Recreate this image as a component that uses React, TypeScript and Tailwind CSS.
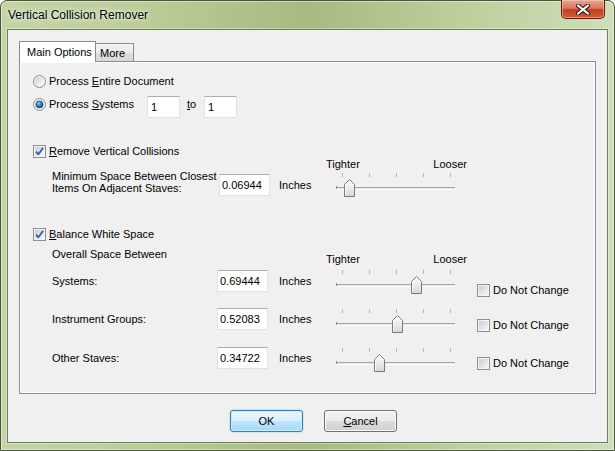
import React from "react";

function Radio({ checked }: { checked?: boolean }) {
  return (
    <svg width="13" height="13" viewBox="0 0 13 13" className="shrink-0">
      <defs>
        <linearGradient id={checked ? "rg1" : "rg0"} x1="0" y1="0" x2="1" y2="1">
          <stop offset="0" stopColor="#d0d0d0" />
          <stop offset="1" stopColor="#ffffff" />
        </linearGradient>
        <radialGradient id="rdot" cx="0.4" cy="0.35" r="0.7">
          <stop offset="0" stopColor="#8fd3ff" />
          <stop offset="0.45" stopColor="#2d87c9" />
          <stop offset="1" stopColor="#12396b" />
        </radialGradient>
      </defs>
      <circle cx="6.5" cy="6.5" r="6" fill="#f4f4f4" stroke="#8a8a8a" strokeWidth="1" />
      <circle cx="6.5" cy="6.5" r="4.5" fill={`url(#${checked ? "rg1" : "rg0"})`} />
      {checked && <circle cx="6.5" cy="6.5" r="3.6" fill="url(#rdot)" stroke="#1a3c63" strokeWidth="0.6" />}
    </svg>
  );
}

function Check({ checked }: { checked?: boolean }) {
  return (
    <svg width="13" height="13" viewBox="0 0 13 13" className="shrink-0">
      <defs>
        <linearGradient id="cbg" x1="0" y1="0" x2="1" y2="1">
          <stop offset="0" stopColor="#c9cdd2" />
          <stop offset="1" stopColor="#f7f7f7" />
        </linearGradient>
      </defs>
      <rect x="0.5" y="0.5" width="12" height="12" fill="#f4f4f4" stroke="#8e8f8f" />
      <rect x="2" y="2" width="9" height="9" fill="url(#cbg)" />
      {checked && (
        <path d="M3 6.6 L5.4 9.3 L10.2 2.8" fill="none" stroke="#3f5fa6" strokeWidth="1.9" strokeLinejoin="round" />
      )}
    </svg>
  );
}

function TextBox({ value, w, pl }: { value: string; w: string; pl: string }) {
  return (
    <div
      className={`${w} h-[22px] shrink-0 bg-white border border-[#dfe2e7] border-t-[#abadb3] ${pl} pt-[3px] leading-[14px]`}
    >
      {value}
    </div>
  );
}

function Slider({ thumb }: { thumb: number }) {
  const ticks = [6, 33, 60, 87, 114];
  return (
    <div className="relative w-[119px] h-[26px] shrink-0">
      {ticks.map((t) => (
        <div key={t} className="absolute top-0 w-px h-[4px] bg-[#b8b8b8]" style={{ left: t }} />
      ))}
      <div className="absolute left-0 right-0 top-[14px] h-[3px] border-t border-t-[#a7a7a7] bg-[#e4e4e4] border-b border-b-white" />
      <div className="absolute left-0 top-[13px] w-px h-[3px] bg-[#8a8a8a]" />
      <svg className="absolute top-[6px]" style={{ left: thumb }} width="11" height="18" viewBox="0 0 11 18">
        <defs>
          <linearGradient id="thg" x1="0" y1="0" x2="0" y2="1">
            <stop offset="0" stopColor="#fbfbfb" />
            <stop offset="0.5" stopColor="#ececec" />
            <stop offset="1" stopColor="#d6d6d6" />
          </linearGradient>
        </defs>
        <path d="M0.5 17.5 V5.5 L5.5 0.5 L10.5 5.5 V17.5 Z" fill="url(#thg)" stroke="#7a7a7a" strokeLinejoin="round" />
        <path d="M1.5 16.5 V6 L5.5 2 L9.5 6" fill="none" stroke="#ffffff" strokeWidth="0.8" />
      </svg>
    </div>
  );
}

function DNC({ mt }: { mt: string }) {
  return (
    <div className={`${mt} ml-[22px] flex h-[13px] items-center gap-[3px]`}>
      <Check />
      <span className="leading-[13px]">Do Not Change</span>
    </div>
  );
}

function SpaceRow({
  label,
  value,
  thumb,
  mt,
  sliderMt,
  dncMt,
}: {
  label: string;
  value: string;
  thumb: number;
  mt: string;
  sliderMt: string;
  dncMt: string;
}) {
  return (
    <div className={`${mt} flex h-[22px] items-start`}>
      <div className="ml-[19px] w-[165px] h-[22px] flex items-center">{label}</div>
      <TextBox value={value} w="w-[51px]" pl="pl-[2px]" />
      <div className="ml-[11px] w-[47px] h-[22px] flex items-center">Inches</div>
      <div className={`ml-[10px] ${sliderMt}`}>
        <Slider thumb={thumb} />
      </div>
      <DNC mt={dncMt} />
    </div>
  );
}

export default function App() {
  return (
    <div className="w-[615px] h-[451px] font-['Liberation_Sans',Arial,sans-serif] text-[11px] text-black">
      <div className="w-full h-full flex flex-col rounded-t-[7px] border border-[#4a5638] bg-[linear-gradient(90deg,#c3d4a5_0%,#b9cc97_25%,#a6ba82_50%,#bccf9c_75%,#d0ddba_100%)] shadow-[inset_0_0_0_1px_rgba(255,255,255,0.45)]">
        {/* title bar */}
        <div className="h-[28px] flex items-start justify-between shrink-0">
          <div className="pl-[7px] pt-[6px] text-[12px] leading-[16px] text-black [text-shadow:0_0_8px_rgba(255,255,255,0.95),0_0_3px_rgba(255,255,255,0.9)]">
            Vertical Collision Remover
          </div>
          <div className="mt-[-1px] mr-[9px] w-[44px] h-[19px] rounded-b-[5px] border border-[#5b1e12] border-t-0 bg-[linear-gradient(180deg,#e8a796_0%,#d9765f_45%,#c2401f_55%,#d25a39_100%)] shadow-[inset_0_0_0_1px_rgba(255,210,190,0.5)] flex items-center justify-center">
            <svg width="14" height="11" viewBox="0 0 14 11">
              <path d="M2 1.5 L12 9.5 M12 1.5 L2 9.5" stroke="#3a1a14" strokeWidth="4.2" strokeLinecap="round" />
              <path d="M2 1.5 L12 9.5 M12 1.5 L2 9.5" stroke="#ffffff" strokeWidth="2.2" strokeLinecap="round" />
            </svg>
          </div>
        </div>
        {/* client area */}
        <div className="flex-1 mx-[6px] mb-[7px] border border-[#6e7d57] bg-[#f0f0f0] flex flex-col pt-[11px] px-[11px] pb-[10px] shadow-[0_0_0_1px_rgba(255,255,255,0.35)]">
          {/* tabs */}
          <div className="flex h-[20px] items-start shrink-0">
            <div className="relative z-10 w-[77px] h-[21px] bg-white border border-[#898c95] border-b-0 pl-[7px] pt-[3px] leading-[14px]">
              Main Options
            </div>
            <div className="mt-[2px] w-[38px] h-[18px] border border-l-0 border-[#898c95] border-b-0 bg-[linear-gradient(180deg,#f3f3f3_0%,#ebebeb_50%,#dddddd_51%,#d9d9d9_100%)] pl-[4px] pt-[2px] leading-[14px]">
              More
            </div>
          </div>
          {/* panel */}
          <div className="flex-1 border border-[#898c95] bg-[#f0f0f0] shadow-[inset_1px_1px_0_#ffffff,inset_-1px_-1px_0_#ffffff] flex flex-col pl-[13px]">
            <div className="mt-[11px] flex h-[16px] items-center gap-[3px]">
              <Radio />
              <span>
                Process <u className="underline-offset-1">E</u>ntire Document
              </span>
            </div>
            <div className="mt-[7px] flex h-[22px] items-start">
              <div className="mt-[2px]">
                <Radio checked />
              </div>
              <span className="ml-[3px] w-[98px] leading-[16px] mt-[0px]">
                Process <u className="underline-offset-1">S</u>ystems
              </span>
              <TextBox value="1" w="w-[33px]" pl="pl-[3px]" />
              <span className="ml-[7px] w-[17px] leading-[16px]">
                <u className="underline-offset-1">t</u>o
              </span>
              <TextBox value="1" w="w-[33px]" pl="pl-[3px]" />
            </div>

            <div className="mt-[26px] flex h-[14px] items-center gap-[3px]">
              <Check checked />
              <span>
                <u className="underline-offset-1">R</u>emove Vertical Collisions
              </span>
            </div>

            <div className="flex h-[42px] items-start">
              <div className="ml-[19px] w-[167px] mt-[12px] leading-[12px]">
                Minimum Space Between Closest
                <br />
                Items On Adjacent Staves:
              </div>
              <div className="mt-[16px]">
                <TextBox value="0.06944" w="w-[51px]" pl="pl-[2px]" />
              </div>
              <div className="ml-[9px] w-[47px] mt-[19px] leading-[16px]">Inches</div>
              <div className="w-[141px] flex flex-col">
                <div className="flex justify-between h-[12px] leading-[12px]">
                  <span>Tighter</span>
                  <span>Looser</span>
                </div>
                <div className="ml-[10px] mt-[3px]">
                  <Slider thumb={8} />
                </div>
              </div>
            </div>

            <div className="mt-[27px] flex h-[14px] items-center gap-[3px]">
              <Check checked />
              <span>
                <u className="underline-offset-1">B</u>alance White Space
              </span>
            </div>

            <div className="mt-[6px] flex items-start">
              <div className="ml-[19px] w-[274px] leading-[14px]">Overall Space Between</div>
              <div className="mt-[6px] w-[141px] flex justify-between h-[12px] leading-[12px]">
                <span>Tighter</span>
                <span>Looser</span>
              </div>
            </div>

            <SpaceRow label="Systems:" value="0.69444" thumb={75} mt="mt-[5px]" sliderMt="mt-[0px]" dncMt="mt-[14px]" />
            <SpaceRow label="Instrument Groups:" value="0.52083" thumb={56} mt="mt-[16px]" sliderMt="mt-[1px]" dncMt="mt-[11px]" />
            <SpaceRow label="Other Staves:" value="0.34722" thumb={38} mt="mt-[17px]" sliderMt="mt-[1px]" dncMt="mt-[10px]" />
          </div>
          {/* buttons */}
          <div className="mt-[16px] h-[22px] flex shrink-0 pl-[211px]">
            <button className="w-[73px] h-[22px] rounded-[3px] border border-[#3c7fb1] bg-[linear-gradient(180deg,#eaf6fd_0%,#d9f0fc_50%,#bee6fd_51%,#a7d9f5_100%)] shadow-[inset_0_0_0_1px_#c8ecfe,0_0_2px_#7fc9f2] leading-[14px]">
              OK
            </button>
            <button className="ml-[21px] w-[73px] h-[22px] rounded-[3px] border border-[#707070] bg-[linear-gradient(180deg,#f2f2f2_0%,#ebebeb_50%,#dddddd_51%,#cfcfcf_100%)] shadow-[inset_0_0_0_1px_#fcfcfc] leading-[14px]">
              <u className="underline-offset-1">C</u>ancel
            </button>
          </div>
        </div>
      </div>
    </div>
  );
}
